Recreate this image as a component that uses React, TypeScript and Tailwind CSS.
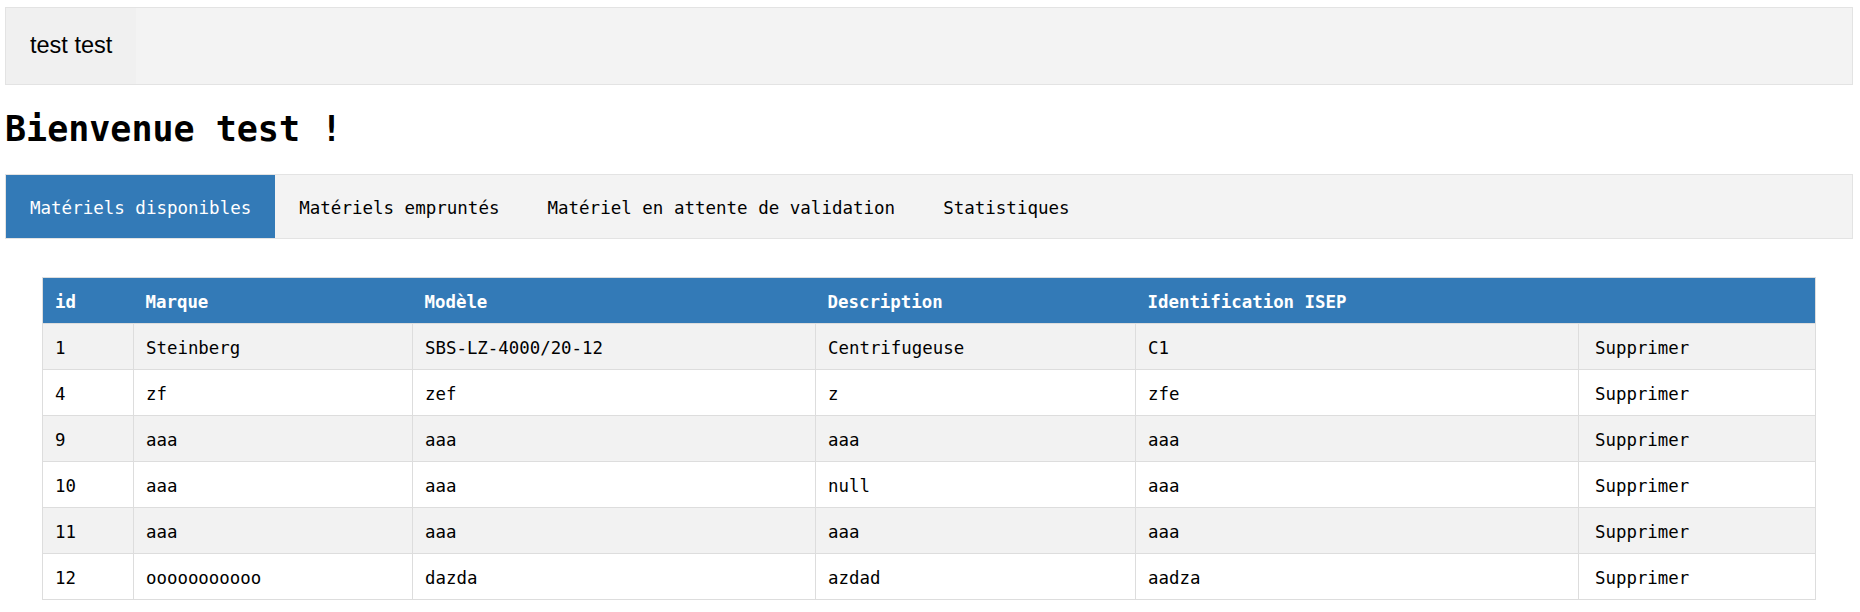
import React from 'react';

const rows = [
  { id: '1', marque: 'Steinberg', modele: 'SBS-LZ-4000/20-12', description: 'Centrifugeuse', isep: 'C1' },
  { id: '4', marque: 'zf', modele: 'zef', description: 'z', isep: 'zfe' },
  { id: '9', marque: 'aaa', modele: 'aaa', description: 'aaa', isep: 'aaa' },
  { id: '10', marque: 'aaa', modele: 'aaa', description: 'null', isep: 'aaa' },
  { id: '11', marque: 'aaa', modele: 'aaa', description: 'aaa', isep: 'aaa' },
  { id: '12', marque: 'ooooooooooo', modele: 'dazda', description: 'azdad', isep: 'aadza' },
];

const tabs = [
  'Matériels disponibles',
  'Matériels empruntés',
  'Matériel en attente de validation',
  'Statistiques',
];

export default function App() {
  const mono = "font-['DejaVu_Sans_Mono',monospace]";

  return (
    <div className={`min-h-screen bg-white text-black pt-[7px] pl-[5px] pr-[7px] ${mono}`}>
      {/* top user bar */}
      <div className="flex h-[78px] border border-[#e3e3e3] bg-[#f3f3f3]">
        <div className="flex items-center bg-[#f0f0f0] px-6 font-['Liberation_Sans',Arial,sans-serif] text-[23.5px]">
          test test
        </div>
      </div>

      <h1 className="mt-[27px] text-[35px] font-bold leading-[35px]">Bienvenue test !</h1>

      {/* tabs */}
      <div className="mt-[27px] flex h-[65px] border border-[#e3e3e3] bg-[#f3f3f3]">
        {tabs.map((t, i) => (
          <div
            key={t}
            className={`flex items-center px-6 pt-[4px] text-[17.5px] ${i === 0 ? 'bg-[#337ab7] text-white' : 'text-black'}`}
          >
            {t}
          </div>
        ))}
      </div>

      <div className="px-[37px] pt-[38px]">
        <table className="w-full table-fixed border-collapse border border-[#dddddd] text-[17.4px]">
          <colgroup>
            <col className="w-[91px]" />
            <col className="w-[279px]" />
            <col className="w-[403px]" />
            <col className="w-[320px]" />
            <col className="w-[443px]" />
            <col className="w-[237px]" />
          </colgroup>
          <thead>
            <tr className="h-[46px] bg-[#337ab7] text-left text-white">
              <th className="px-3 pt-[3px] font-bold">id</th>
              <th className="px-3 pt-[3px] font-bold">Marque</th>
              <th className="px-3 pt-[3px] font-bold">Modèle</th>
              <th className="px-3 pt-[3px] font-bold">Description</th>
              <th className="px-3 pt-[3px] font-bold">Identification ISEP</th>
              <th className="px-3"></th>
            </tr>
          </thead>
          <tbody>
            {rows.map((r, i) => (
              <tr key={r.id} className={`h-[46px] ${i % 2 === 0 ? 'bg-[#f2f2f2]' : 'bg-white'}`}>
                <td className="border border-[#dddddd] px-3 pt-[4px]">{r.id}</td>
                <td className="border border-[#dddddd] px-3 pt-[4px]">{r.marque}</td>
                <td className="border border-[#dddddd] px-3 pt-[4px]">{r.modele}</td>
                <td className="border border-[#dddddd] px-3 pt-[4px]">{r.description}</td>
                <td className="border border-[#dddddd] px-3 pt-[4px]">{r.isep}</td>
                <td className="border border-[#dddddd] px-4 pt-[4px]">Supprimer</td>
              </tr>
            ))}
          </tbody>
        </table>
      </div>
    </div>
  );
}
